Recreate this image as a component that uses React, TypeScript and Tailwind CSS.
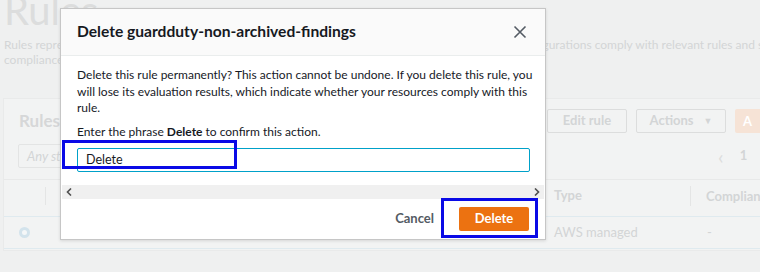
import React from 'react';

const font = { fontFamily: 'Lato, "Noto Sans", Arial, sans-serif' };

const Background: React.FC = () => (
  <div className="w-[760px] h-[272px] bg-[#eff0f0] text-[#d3d5d6] overflow-hidden" style={font}>
    <div className="pl-[4px] -mt-[12px] text-[40px] leading-[44px] text-[#dcdddd]">Rules</div>
    <div className="pl-[4px] pt-[5px] text-[12px] leading-[15px] whitespace-nowrap">
      Rules represent your desired configuration settings. AWS Config evaluates whether your resource configurations comply with relevant rules and summarizes the
      <br />
      compliance results.
    </div>
    <div className="ml-[3px] mt-[31px] w-[800px] h-[153px] bg-[#f2f3f3] border border-[#e9eaea] whitespace-nowrap">
      <div className="flex items-center h-[44px]">
        <span className="w-[543px] pl-[15px] text-[17px] font-bold text-[#d6d7d8]">Rules</span>
        <div className="flex items-center gap-[9px]">
          <div className="w-[80px] h-[24px] border border-[#dcdddd] rounded-[2px] flex items-center justify-center text-[13px] font-bold">Edit rule</div>
          <div className="w-[90px] h-[24px] border border-[#dcdddd] rounded-[2px] flex items-center justify-center gap-[10px] text-[13px] font-bold">
            Actions <span className="text-[9px]">▼</span>
          </div>
          <div className="w-[40px] h-[24px] bg-[#f6e3d6] rounded-[2px] pl-[8px] text-[13px] font-bold text-white leading-[24px]">A</div>
        </div>
      </div>
      <div className="flex items-center h-[26px]">
        <div className="ml-[14px] w-[200px] h-[24px] border border-[#e3e4e4] rounded-[2px] pl-[8px] text-[13px] italic leading-[22px]">Any status</div>
        <span className="ml-[500px] text-[20px] leading-[20px] text-[#dcdddd]">‹</span>
        <span className="ml-[16px] text-[13px] font-bold">1</span>
      </div>
      <div className="mt-[10px] h-[33px] border-t border-[#e8e9e9] flex items-center text-[13px] font-bold">
        <div className="w-[42px] h-[18px] border-r border-[#e4e5e5]" />
        <span className="ml-[505px] w-[139px] pl-[3px]">Type</span>
        <span className="h-[20px] border-l border-[#e4e5e5] pl-[15px] leading-[20px]">Compliance</span>
      </div>
      <div className="mt-[4px] h-[33px] border-y border-[#dfeaef] flex items-center text-[13px]">
        <div className="ml-[15px] w-[11px] h-[11px] rounded-full border-[3px] border-[#d3e3ec] bg-[#f5f7f8]" />
        <span className="ml-[521px] w-[156px] pl-[3px]">AWS managed</span>
        <span>-</span>
      </div>
    </div>
  </div>
);

const Modal: React.FC = () => (
  <div
    className="absolute left-[60px] top-[8px] w-[486px] h-[232px] bg-white border border-[#c6c6c6] shadow-[0_1px_3px_rgba(0,0,0,0.12)] flex flex-col"
    style={font}
  >
    <div className="h-[47px] shrink-0 bg-[#fafafa] border-b border-[#eaeded] flex items-center pl-[16px] pr-[18px]">
      <h2 className="text-[15.6px] font-bold text-[#16191f] whitespace-nowrap">Delete guardduty-non-archived-findings</h2>
      <svg className="ml-auto" width="14" height="14" viewBox="0 0 14 14">
        <path d="M1.5 1.5 L12.5 12.5 M12.5 1.5 L1.5 12.5" stroke="#545b64" strokeWidth="1.6" fill="none" />
      </svg>
    </div>
    <div className="px-[16px] pt-[11px] text-[12px] leading-[16.5px] text-[#16191f] whitespace-nowrap">
      <p>
        Delete this rule permanently? This action cannot be undone. If you delete this rule, you
        <br />
        will lose its evaluation results, which indicate whether your resources comply with this
        <br />
        rule.
      </p>
      <p className="mt-[7px]">
        Enter the phrase <b>Delete</b> to confirm this action.
      </p>
      <div className="mt-[8px] h-[24px] w-[453px] border border-[#00a1c9] rounded-[2px] pl-[8px] flex items-center text-[12.5px]">
        Delete
      </div>
    </div>
    <div className="mt-[13px] mx-px h-[14px] shrink-0 bg-[#f0f0f0] flex items-center justify-between px-[4px]">
      <svg width="6" height="8" viewBox="0 0 6 8">
        <path d="M5 0.5 L1.5 4 L5 7.5" stroke="#505050" strokeWidth="1.6" fill="none" />
      </svg>
      <svg width="6" height="8" viewBox="0 0 6 8">
        <path d="M1 0.5 L4.5 4 L1 7.5" stroke="#505050" strokeWidth="1.6" fill="none" />
      </svg>
    </div>
    <div className="flex-1 flex items-center justify-end pr-[16px] gap-[25px]">
      <span className="text-[13px] font-bold text-[#545b64]">Cancel</span>
      <div className="w-[70px] h-[24px] bg-[#ec7211] rounded-[2px] flex items-center justify-center text-[13px] font-bold text-white">
        Delete
      </div>
    </div>
  </div>
);

export default function App() {
  return (
    <div className="relative w-[760px] h-[272px] overflow-hidden">
      <Background />
      <Modal />
      {/* annotation boxes */}
      <div className="absolute left-[62px] top-[140px] w-[175px] h-[29px] border-[3px] border-[#0a0ae6]" />
      <div className="absolute left-[441px] top-[198px] w-[97px] h-[40px] border-[3px] border-[#0a0ae6]" />
    </div>
  );
}
